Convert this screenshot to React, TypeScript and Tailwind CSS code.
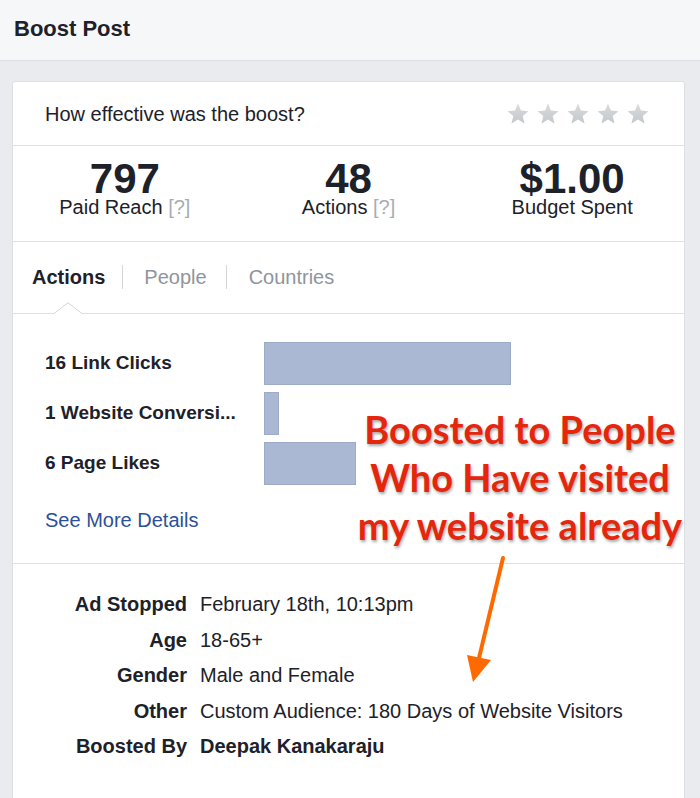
import React from "react";

const stats = [
  { value: "797", label: "Paid Reach", help: true },
  { value: "48", label: "Actions", help: true },
  { value: "$1.00", label: "Budget Spent", help: false },
];

const actions = [
  { label: "16 Link Clicks", width: 247 },
  { label: "1 Website Conversi...", width: 15 },
  { label: "6 Page Likes", width: 92 },
];

const details = [
  { label: "Ad Stopped", value: "February 18th, 10:13pm" },
  { label: "Age", value: "18-65+" },
  { label: "Gender", value: "Male and Female" },
  { label: "Other", value: "Custom Audience: 180 Days of Website Visitors" },
  { label: "Boosted By", value: "Deepak Kanakaraju", bold: true },
];

function Star() {
  return (
    <svg width="24" height="24" viewBox="0 0 24 24">
      <defs>
        <linearGradient id="starFill" x1="0" y1="0" x2="0" y2="1">
          <stop offset="0" stopColor="#d9dbde" />
          <stop offset="1" stopColor="#c4c7cb" />
        </linearGradient>
      </defs>
      <polygon
        points="12,1.5 14.9,8.6 22.5,9.2 16.7,14.1 18.5,21.6 12,17.6 5.5,21.6 7.3,14.1 1.5,9.2 9.1,8.6"
        fill="url(#starFill)"
      />
    </svg>
  );
}

export default function App() {
  return (
    <div className="relative h-[798px] overflow-hidden bg-[#e9ebee] font-['Liberation_Sans',Arial,sans-serif] text-[#1d2129]">
      {/* Header */}
      <div className="flex h-[61px] items-center border-b border-[#dddfe2] bg-[#f6f7f9] px-[14px] pb-[3px]">
        <h1 className="text-[22px] font-bold">Boost Post</h1>
      </div>

      {/* Card */}
      <div className="mt-[20px] ml-[12px] mr-[15px] min-h-[740px] rounded-[3px] border border-[#dddfe2] bg-white">
        {/* Rating */}
        <div className="flex h-[64px] items-center justify-between border-b border-[#dddfe2] pl-[32px] pr-[34px]">
          <span className="text-[20px]">How effective was the boost?</span>
          <div className="flex gap-[6px]">
            <Star />
            <Star />
            <Star />
            <Star />
            <Star />
          </div>
        </div>

        {/* Stats */}
        <div className="grid h-[96px] grid-cols-3 border-b border-[#dddfe2] pt-[15px]">
          {stats.map((s) => (
            <div key={s.label} className="flex flex-col items-center">
              <span className="text-[42px] font-bold leading-[36px]">{s.value}</span>
              <span className="text-[20px] leading-[20px]">
                {s.label}
                {s.help && <span className="text-[#a8acb2]"> [?]</span>}
              </span>
            </div>
          ))}
        </div>

        {/* Tabs */}
        <div className="relative flex h-[72px] items-start border-b border-[#dddfe2] pl-[19px] pt-[23px] text-[20px] leading-[24px]">
          <span className="font-bold">Actions</span>
          <span className="ml-[17px] mr-[21px] h-[24px] w-px bg-[#d3d6db]" />
          <span className="text-[#90949c]">People</span>
          <span className="ml-[19px] mr-[22px] h-[24px] w-px bg-[#d3d6db]" />
          <span className="text-[#90949c]">Countries</span>
          <svg className="absolute bottom-[-1px] left-[41px]" width="28" height="12" viewBox="0 0 28 12">
            <polygon points="0,12 14,1 28,12" fill="#ffffff" />
            <polyline points="0,11.5 14,0.7 28,11.5" fill="none" stroke="#d3d6db" strokeWidth="1" />
          </svg>
        </div>

        {/* Actions chart */}
        <div className="h-[250px] border-b border-[#dddfe2] pl-[32px] pt-[28px]">
          <div className="flex flex-col gap-[7px]">
            {actions.map((a) => (
              <div key={a.label} className="flex h-[43px] items-center">
                <span className="w-[219px] text-[19px] font-bold whitespace-nowrap">{a.label}</span>
                <div
                  className="h-[43px] border border-[#9dabc8] bg-[#abb8d4]"
                  style={{ width: a.width }}
                />
              </div>
            ))}
          </div>
          <a className="mt-[23px] block text-[20px] leading-[24px] text-[#2d509a]">See More Details</a>
        </div>

        {/* Details */}
        <div className="grid grid-cols-[174px_1fr] gap-x-[13px] pt-[23px] text-[20px] leading-[35.5px]">
          {details.map((d) => (
            <React.Fragment key={d.label}>
              <span className="text-right font-bold">{d.label}</span>
              <span className={d.bold ? "font-bold" : ""}>{d.value}</span>
            </React.Fragment>
          ))}
        </div>
      </div>

      {/* Annotation */}
      <div className="absolute left-[352px] top-[405px] w-[336px] text-center font-['Lato',sans-serif] text-[38px] font-bold leading-[48px] text-[#e6260c] [text-shadow:1px_2px_3px_rgba(0,0,0,0.35)]">
        <div className="whitespace-nowrap">Boosted to People</div>
        <div className="whitespace-nowrap">Who Have visited</div>
        <div className="whitespace-nowrap">my website already</div>
      </div>
      <svg className="absolute left-[460px] top-[552px]" width="50" height="135" viewBox="0 0 50 135">
        <line x1="43" y1="6" x2="19" y2="106" stroke="#ff6a00" strokeWidth="4" strokeLinecap="round" />
        <polygon points="13,130 7,103 31,108" fill="#ff6a00" />
      </svg>
    </div>
  );
}
